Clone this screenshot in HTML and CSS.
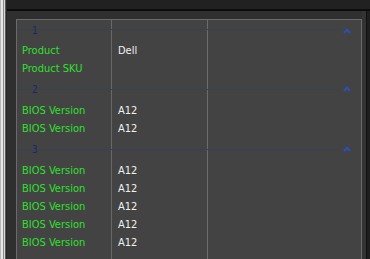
FILE: index.html
```html
<html>
    <head>
        <title>Properties</title>
        <link rel="stylesheet" href="styles.css">
    </head>
    <body>
        <div class="edge-left"></div>
        <div class="main">
            <div class="topbar"></div>
            <div class="content">
                <div class="panel">
                    <div class="group-head first">
                        <span class="group-num">1</span>
                        <svg class="chevron" width="8" height="6" viewBox="0 0 8 6"><path d="M1 5 L4 1.8 L7 5" fill="none" stroke="#2b4fb8" stroke-width="2"/></svg>
                    </div>
                    <div class="row"><span class="key">Product</span><span class="val">Dell</span></div>
                    <div class="row"><span class="key">Product SKU</span><span class="val"></span></div>

                    <div class="group-head">
                        <span class="group-num">2</span>
                        <svg class="chevron" width="8" height="6" viewBox="0 0 8 6"><path d="M1 5 L4 1.8 L7 5" fill="none" stroke="#2b4fb8" stroke-width="2"/></svg>
                    </div>
                    <div class="row"><span class="key">BIOS Version</span><span class="val">A12</span></div>
                    <div class="row"><span class="key">BIOS Version</span><span class="val">A12</span></div>

                    <div class="group-head">
                        <span class="group-num">3</span>
                        <svg class="chevron" width="8" height="6" viewBox="0 0 8 6"><path d="M1 5 L4 1.8 L7 5" fill="none" stroke="#2b4fb8" stroke-width="2"/></svg>
                    </div>
                    <div class="row"><span class="key">BIOS Version</span><span class="val">A12</span></div>
                    <div class="row"><span class="key">BIOS Version</span><span class="val">A12</span></div>
                    <div class="row"><span class="key">BIOS Version</span><span class="val">A12</span></div>
                    <div class="row"><span class="key">BIOS Version</span><span class="val">A12</span></div>
                    <div class="row"><span class="key">BIOS Version</span><span class="val">A12</span></div>
                </div>
            </div>
        </div>
        <div class="edge-right">
            <div class="topbar"></div>
            <div class="edge-right-body"></div>
        </div>
    </body>
</html>
```

FILE: styles.css
```css
body {
    margin: 0;
    width: 370px;
    height: 259px;
    overflow: hidden;
    display: flex;
    background: #2f2f2f;
    font-family: "DejaVu Sans", "Liberation Sans", sans-serif;
    font-stretch: condensed;
    font-size: 11px;
}
.edge-left {
    width: 7px;
    flex: none;
    background: linear-gradient(to right, #b8b8b8 0, #b8b8b8 1px, #e6e6e6 1px, #e6e6e6 3px, #8a8a8a 3px, #8a8a8a 4px, #d8d8d8 4px, #d8d8d8 5px, #5a5a5a 5px, #5a5a5a 6px, #262626 6px);
}
.main {
    flex: 1;
    display: flex;
    flex-direction: column;
}
.topbar {
    height: 9px;
    flex: none;
    background: #212121;
    border-bottom: 2px solid #0c0c0c;
}
.content {
    flex: 1;
    padding: 8px 0 0 9px;
    display: flex;
}
.panel {
    flex: 1;
    background-color: #434343;
    background-image: linear-gradient(to right, transparent 94px, #686868 94px, #686868 95px, transparent 95px, transparent 190px, #6c6c6c 190px, #6c6c6c 191px, transparent 191px);
    border: 1px solid #6a6a6a;
    border-bottom: none;
}
.group-head {
    height: 24px;
    display: flex;
    align-items: center;
    padding: 0 10px 0 15px;
    background-image: linear-gradient(#3b4151, #3b4151);
    background-repeat: no-repeat;
    background-size: calc(100% - 20px) 1px;
    background-position: 0 12px;
}
.group-head.first {
    height: 21px;
    background-position: 0 9px;
}
.group-num {
    flex: 1;
    color: #1c2766;
    font-size: 10px;
}
.chevron {
    display: block;
}
.row {
    height: 18px;
    display: grid;
    grid-template-columns: 95px 96px 1fr;
    align-items: center;
}
.key {
    padding-left: 5px;
    color: #2ee02e;
}
.val {
    padding-left: 6px;
    color: #f0f0f0;
}
.edge-right {
    width: 8px;
    flex: none;
    display: flex;
    flex-direction: column;
}
.edge-right-body {
    flex: 1;
    background: linear-gradient(to right, #333 0, #333 4px, #111 4px, #111 5px, #1e1e1e 5px);
}
```
